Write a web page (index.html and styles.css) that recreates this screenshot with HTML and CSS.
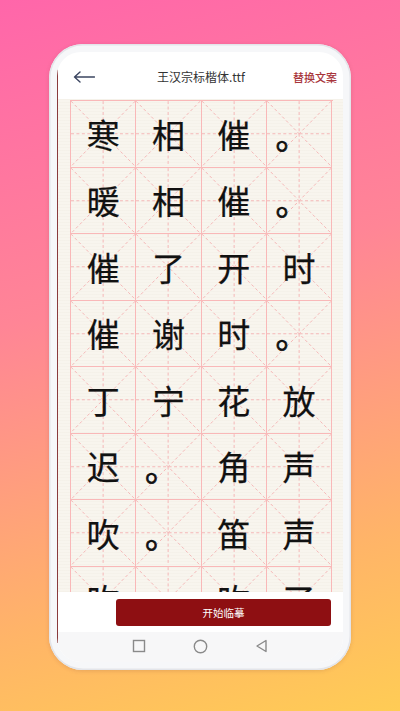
FILE: index.html
```html
<!DOCTYPE html>
<html lang="zh">
<head>
<meta charset="utf-8">
<title>王汉宗标楷体</title>
<link rel="stylesheet" href="styles.css">
</head>
<body>
<svg class="defs" width="0" height="0" aria-hidden="true">
  <symbol id="guide" viewBox="0 0 65 66">
    <g stroke="#f5b6b6" stroke-width="1" stroke-dasharray="3 2.5" fill="none">
      <line x1="32.5" y1="0" x2="32.5" y2="66"/>
      <line x1="0" y1="33" x2="65" y2="33"/>
      <line x1="0" y1="0" x2="65" y2="66"/>
      <line x1="65" y1="0" x2="0" y2="66"/>
    </g>
  </symbol>
</svg>
<div class="phone">
  <div class="screen">
    <header class="topbar">
      <svg class="back" width="22" height="12" viewBox="0 0 22 12"><path d="M21.5 6H1.5M7 1L1.5 6L7 11" fill="none" stroke="#3b4560" stroke-width="1.4" stroke-linecap="round" stroke-linejoin="round"/></svg>
      <div class="title">王汉宗标楷体.ttf</div>
      <div class="action">替换文案</div>
    </header>
    <main class="paper">
      <div class="grid">
        <div class="cell"><svg class="g"><use href="#guide"/></svg><span>寒</span></div>
        <div class="cell"><svg class="g"><use href="#guide"/></svg><span>相</span></div>
        <div class="cell"><svg class="g"><use href="#guide"/></svg><span>催</span></div>
        <div class="cell"><svg class="g"><use href="#guide"/></svg><span class="p">。</span></div>
        <div class="cell"><svg class="g"><use href="#guide"/></svg><span>暖</span></div>
        <div class="cell"><svg class="g"><use href="#guide"/></svg><span>相</span></div>
        <div class="cell"><svg class="g"><use href="#guide"/></svg><span>催</span></div>
        <div class="cell"><svg class="g"><use href="#guide"/></svg><span class="p">。</span></div>
        <div class="cell"><svg class="g"><use href="#guide"/></svg><span>催</span></div>
        <div class="cell"><svg class="g"><use href="#guide"/></svg><span>了</span></div>
        <div class="cell"><svg class="g"><use href="#guide"/></svg><span>开</span></div>
        <div class="cell"><svg class="g"><use href="#guide"/></svg><span>时</span></div>
        <div class="cell"><svg class="g"><use href="#guide"/></svg><span>催</span></div>
        <div class="cell"><svg class="g"><use href="#guide"/></svg><span>谢</span></div>
        <div class="cell"><svg class="g"><use href="#guide"/></svg><span>时</span></div>
        <div class="cell"><svg class="g"><use href="#guide"/></svg><span class="p">。</span></div>
        <div class="cell"><svg class="g"><use href="#guide"/></svg><span>丁</span></div>
        <div class="cell"><svg class="g"><use href="#guide"/></svg><span>宁</span></div>
        <div class="cell"><svg class="g"><use href="#guide"/></svg><span>花</span></div>
        <div class="cell"><svg class="g"><use href="#guide"/></svg><span>放</span></div>
        <div class="cell"><svg class="g"><use href="#guide"/></svg><span>迟</span></div>
        <div class="cell"><svg class="g"><use href="#guide"/></svg><span class="p">。</span></div>
        <div class="cell"><svg class="g"><use href="#guide"/></svg><span>角</span></div>
        <div class="cell"><svg class="g"><use href="#guide"/></svg><span>声</span></div>
        <div class="cell"><svg class="g"><use href="#guide"/></svg><span>吹</span></div>
        <div class="cell"><svg class="g"><use href="#guide"/></svg><span class="p">。</span></div>
        <div class="cell"><svg class="g"><use href="#guide"/></svg><span>笛</span></div>
        <div class="cell"><svg class="g"><use href="#guide"/></svg><span>声</span></div>
        <div class="cell"><svg class="g"><use href="#guide"/></svg><span>吹</span></div>
        <div class="cell"><svg class="g"><use href="#guide"/></svg><span class="p">。</span></div>
        <div class="cell"><svg class="g"><use href="#guide"/></svg><span>吹</span></div>
        <div class="cell"><svg class="g"><use href="#guide"/></svg><span>了</span></div>
      </div>
    </main>
    <div class="bottombar">
      <button class="start">开始临摹</button>
    </div>
    <nav class="sysnav">
      <svg width="14" height="14" viewBox="0 0 14 14"><rect x="1.5" y="1.5" width="11" height="11" fill="none" stroke="#8a8a8a" stroke-width="1.4"/></svg>
      <svg width="15" height="15" viewBox="0 0 15 15"><circle cx="7.5" cy="7.5" r="6.2" fill="none" stroke="#8a8a8a" stroke-width="1.4"/></svg>
      <svg width="13" height="14" viewBox="0 0 13 14"><path d="M11 1.5V12.5L2 7Z" fill="none" stroke="#8a8a8a" stroke-width="1.4" stroke-linejoin="round"/></svg>
    </nav>
  </div>
</div>
</body>
</html>
```

FILE: styles.css
```css
* { box-sizing: border-box; }
html, body {
  margin: 0;
  padding: 0;
}
body {
  width: 400px;
  height: 711px;
  overflow: hidden;
  background: linear-gradient(165deg, #ff66aa 0%, #ff8596 40%, #ffb468 78%, #ffcc55 100%);
  font-family: "Noto Sans CJK SC", "Noto Sans", sans-serif;
}
.defs { position: absolute; width: 0; height: 0; }

.phone {
  width: 302px;
  height: 626px;
  margin: 44px auto 0;
  padding: 8px;
  border-radius: 34px;
  background: #f6f7f9;
  box-shadow: inset 0 0 0 1.5px #e3e5ea, 0 1px 4px rgba(120, 60, 60, 0.18);
}
.screen {
  position: relative;
  width: 286px;
  height: 610px;
  border-radius: 24px;
  background: #ffffff;
  overflow: hidden;
  display: flex;
  flex-direction: column;
}
.screen::before {
  content: "";
  position: absolute;
  left: 0;
  top: 16px;
  bottom: 19px;
  width: 1px;
  background: #8a3a3c;
  z-index: 2;
}

.topbar {
  height: 47px;
  flex: none;
  display: flex;
  align-items: center;
  padding: 2px 6px 0 16px;
  position: relative;
}
.back { flex: none; }
.title {
  position: absolute;
  left: 0;
  right: 0;
  top: 15px;
  text-align: center;
  font-size: 12px;
  line-height: 20px;
  color: #333333;
  margin-left: 2px;
}
.action {
  margin-left: auto;
  font-size: 11px;
  font-weight: 500;
  color: #a8353b;
}

.paper {
  flex: 1 1 0;
  min-height: 0;
  margin-left: 1px;
  overflow: hidden;
  background-color: #f8f5ee;
  background-image: repeating-linear-gradient(0deg, rgba(120, 100, 60, 0.025) 0 1px, transparent 1px 3px);
  padding: 1px 0 0 12px;
}
.grid {
  display: grid;
  grid-template-columns: repeat(4, 65.25px);
  grid-auto-rows: 66.5px;
  width: 262.5px;
  border-top: 1.5px solid #f9b8b8;
  border-left: 1.5px solid #f9b8b8;
}
.cell {
  position: relative;
  border-right: 1.5px solid #f9b8b8;
  border-bottom: 1.5px solid #f9b8b8;
  display: flex;
  align-items: center;
  justify-content: center;
}
.g {
  position: absolute;
  inset: 0;
  width: 100%;
  height: 100%;
}
.cell span {
  position: relative;
  font-size: 33px;
  font-weight: 400;
  -webkit-text-stroke: 0.25px #111111;
  line-height: 1;
  color: #111111;
  padding-top: 1px;
}
.cell span.p {
  left: -7px;
  top: 1px;
  -webkit-text-stroke: 0.7px #111111;
}

.bottombar {
  height: 40px;
  flex: none;
  background: #ffffff;
  padding: 7px 0 0 59px;
}
.start {
  display: block;
  width: 215px;
  height: 27px;
  border: none;
  border-radius: 3px;
  background: #8e0f12;
  color: #ffffff;
  font-family: "Noto Sans CJK SC", sans-serif;
  font-size: 10.5px;
  padding: 0;
}
.sysnav {
  flex: none;
  height: 30px;
  background: #f7f7f8;
  display: flex;
  align-items: center;
  justify-content: center;
  gap: 47px;
  padding-bottom: 2px;
}
```
